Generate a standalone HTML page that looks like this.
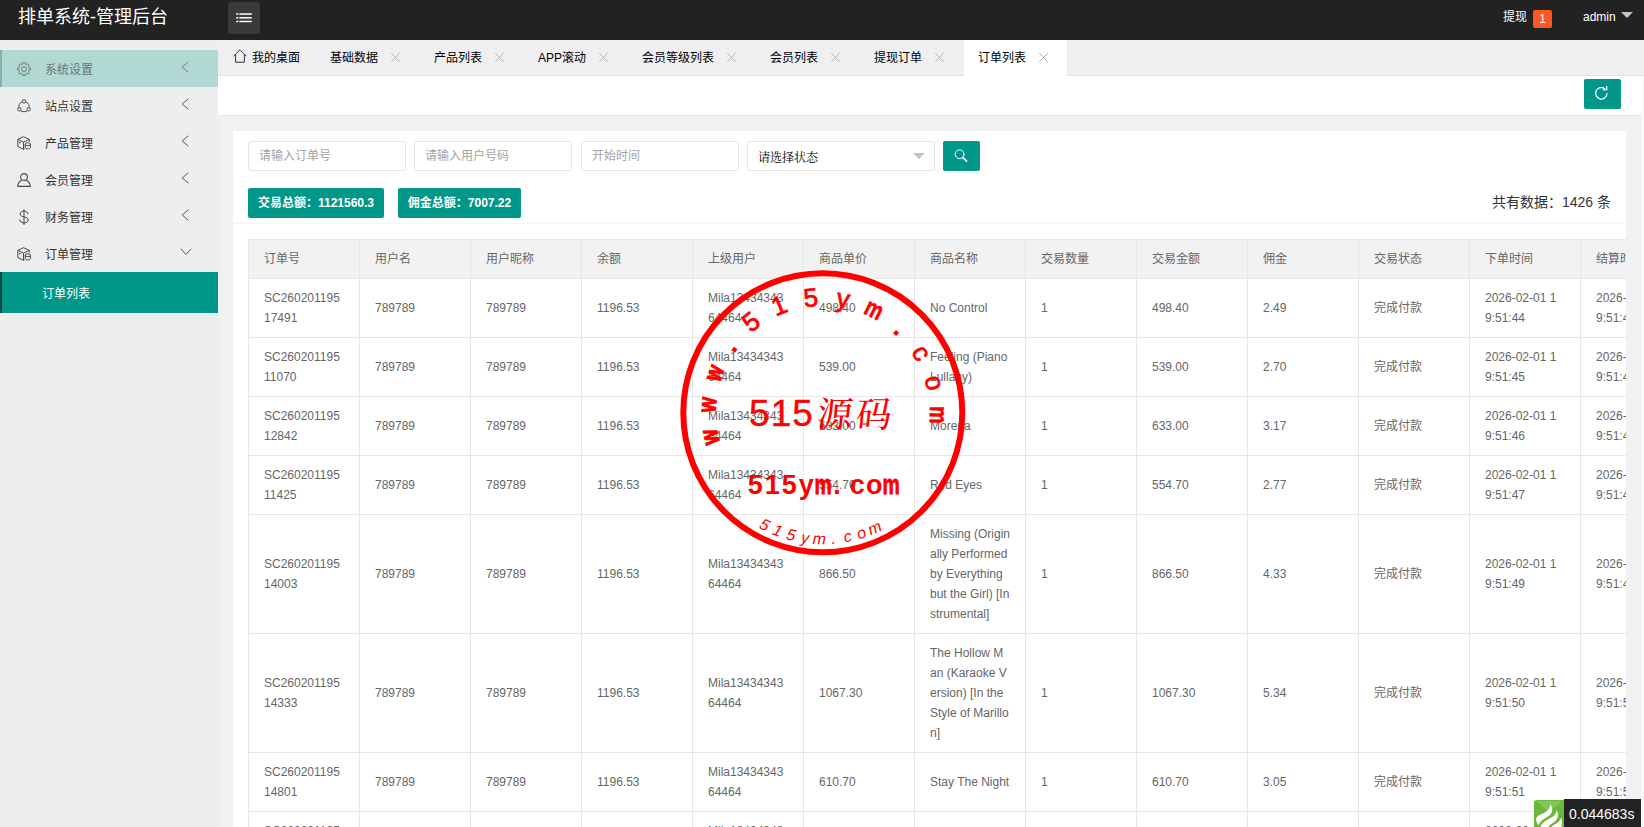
<!DOCTYPE html>
<html lang="zh-CN">
<head>
<meta charset="utf-8">
<title>排单系统-管理后台</title>
<style>
*{box-sizing:border-box;margin:0;padding:0}
html,body{width:1644px;height:827px;overflow:hidden}
body{position:relative;background:#f1f1f1;font-family:"Liberation Sans","Noto Sans CJK SC",sans-serif;font-size:12px;color:#333;line-height:1}
a{color:inherit;text-decoration:none}
ul{list-style:none}
/* header */
.hd{position:absolute;left:0;top:0;width:1644px;height:40px;background:#222}
.logo{position:absolute;left:18px;top:0;height:34px;line-height:34px;font-size:18px;color:#fff;white-space:nowrap}
.burger{position:absolute;left:228px;top:2px;width:32px;height:32px;border-radius:3px;background:#3a3a3a}
.burger svg{position:absolute;left:8px;top:10px}
.hr{position:absolute;top:0;height:34px;line-height:34px;color:#fff;font-size:12px;white-space:nowrap}
.badge{position:absolute;left:1533px;top:10px;width:19px;height:18px;line-height:18px;border-radius:2px;background:#ff5722;color:#fff;text-align:center;font-size:12px}
.tri{position:absolute;width:0;height:0;border:6px solid transparent;border-bottom-width:0}
/* sidebar */
.side{position:absolute;left:0;top:40px;width:218px;height:787px;background:#eee}
.side li{position:absolute;left:0;width:218px;height:37px}
.side li .t{position:absolute;left:45px;top:1px;line-height:38px;font-size:12px;color:#333;white-space:nowrap}
.side li .ic{position:absolute;left:16px;top:11px}
.side li .dl{font-family:"Noto Sans CJK SC",sans-serif;font-weight:300;font-size:17px;line-height:16px;width:16px;text-align:center;color:#333;top:12px}
.side li svg.ar{position:absolute;left:180px;top:11px}
.side li.hov{background:#b2d8d4;border-left:2px solid #7fb4ad}
.side li.hov .t{color:#6a7574;left:43px}
.side li.hov .ic{left:14px}
.side li.hov svg.ar{left:178px}
.side li.sub{top:232px;height:41px;background:#009688;border-left:2px solid #004c45}
.side li.sub .t{left:40px;color:#fff;line-height:42px}
/* tabs */
.tabs{position:absolute;left:218px;top:40px;width:1426px;height:36px;background:#efeef0;border-bottom:1px solid #e2e2e2}
.tab{position:absolute;top:0;height:35px;line-height:37px;font-size:12px;color:#000;white-space:nowrap}
.tab.on{background:#fff;height:36px}
.tab .x{position:absolute;top:12px}
.tool{position:absolute;left:218px;top:76px;width:1423px;height:40px;background:#fff;border-bottom:1px solid #e6e6e6}
.btn{position:absolute;background:#009688;border-radius:2px;color:#fff;height:30px;line-height:30px;font-size:12px;white-space:nowrap;text-align:center}
.sbar{position:absolute;left:1641px;top:76px;width:3px;height:751px;background:#fafafa}
/* card */
.card{position:absolute;left:233px;top:131px;width:1393px;height:700px;background:#fff;border-radius:2px;overflow:hidden}
.inp{position:absolute;top:10px;height:30px;border:1px solid #e6e6e6;border-radius:2px;background:#fff;line-height:29px;padding-left:10px;font-size:12px;color:#a3a3a3;white-space:nowrap}
.hline{position:absolute;left:0;top:92px;width:1393px;height:1px;background:#f6f6f6}
.total{position:absolute;right:15px;top:61px;font-size:14px;color:#333;line-height:20px;white-space:nowrap}
table{position:absolute;left:15px;top:108px;border-collapse:collapse;table-layout:fixed;width:1554px;font-size:12px;color:#666}
th,td{border:1px solid #e6e6e6;padding:9px 15px;line-height:20px;text-align:left;font-weight:400;white-space:nowrap;vertical-align:middle;overflow:hidden}
th{background:#f2f2f2}
/* trace */
.tp{position:absolute;left:1534px;top:799px;width:107px;height:30px}
.tp .tm{position:absolute;left:30px;top:0;width:77px;height:30px;background:#232323;color:#fff;font-size:14px;line-height:30px;padding-left:5px}
.stamp{position:absolute;left:673px;top:263px}
</style>
</head>
<body>
<div class="hd">
  <div class="logo">排单系统-管理后台</div>
  <div class="burger"><svg width="16" height="12" viewBox="0 0 16 12"><g fill="#fff"><rect x="0.2" y="1.3" width="2.2" height="1.5"/><rect x="3.4" y="1.3" width="12.4" height="1.5"/><rect x="0.2" y="5.05" width="2.2" height="1.5"/><rect x="3.4" y="5.05" width="12.4" height="1.5"/><rect x="0.2" y="8.8" width="2.2" height="1.4"/><rect x="3.4" y="8.8" width="12.4" height="1.4"/></g></svg></div>
  <div class="hr" style="left:1503px">提现</div>
  <div class="badge">1</div>
  <div class="hr" style="left:1583px">admin</div>
  <div class="tri" style="left:1621px;top:12px;border-top-color:#c4c4c4"></div>
</div>

<div class="side">
<ul>
  <li class="hov" style="top:10px"><svg class="ic" width="16" height="16" viewBox="-1 -1 16 16" fill="none" stroke="#6f7b7a" stroke-width="1" stroke-linejoin="round"><path d="M5.81 2.04 L5.87 0.50 L8.13 0.50 L8.19 2.04 L9.66 2.65 L10.80 1.60 L12.40 3.20 L11.35 4.34 L11.96 5.81 L13.50 5.87 L13.50 8.13 L11.96 8.19 L11.35 9.66 L12.40 10.80 L10.80 12.40 L9.66 11.35 L8.19 11.96 L8.13 13.50 L5.87 13.50 L5.81 11.96 L4.34 11.35 L3.20 12.40 L1.60 10.80 L2.65 9.66 L2.04 8.19 L0.50 8.13 L0.50 5.87 L2.04 5.81 L2.65 4.34 L1.60 3.20 L3.20 1.60 L4.34 2.65Z"/><circle cx="7" cy="7" r="2.4"/></svg><span class="t">系统设置</span><svg class="ar" width="10" height="12" viewBox="0 0 10 12" fill="none" stroke="#6f7b7a" stroke-width="1"><path d="M8.3 0.8 L2.2 6 L8.3 11.2"/></svg></li>
  <li style="top:47px"><svg class="ic" width="16" height="16" viewBox="-1 -1 16 16" fill="none" stroke="#4a4a4a" stroke-width="1"><circle cx="7" cy="7.6" r="5.2"/><circle cx="7" cy="2.3" r="1.7" fill="#eee"/><circle cx="2.3" cy="10.3" r="1.7" fill="#eee"/><circle cx="11.7" cy="10.3" r="1.7" fill="#eee"/></svg><span class="t">站点设置</span><svg class="ar" width="10" height="12" viewBox="0 0 10 12" fill="none" stroke="#555" stroke-width="1"><path d="M8.3 0.8 L2.2 6 L8.3 11.2"/></svg></li>
  <li style="top:84px"><svg class="ic" width="16" height="16" viewBox="-1 -1 16 16" fill="none" stroke="#4a4a4a" stroke-width="1" stroke-linejoin="round"><path d="M6.5 0.7 L12.3 3.4 L12.3 5.6 M6.5 0.7 L0.8 3.4 L0.8 10.6 L6.5 13.3 L6.5 6.1 L0.8 3.4 M6.5 6.1 L12.3 3.4 M6.5 13.3 L7.6 12.8"/><circle cx="2.9" cy="6.6" r="0.5"/><ellipse cx="10.8" cy="8.2" rx="2.6" ry="1.5"/><path d="M8.2 8.2 V11.4 C8.2 13.4 13.4 13.4 13.4 11.4 V8.2"/></svg><span class="t">产品管理</span><svg class="ar" width="10" height="12" viewBox="0 0 10 12" fill="none" stroke="#555" stroke-width="1"><path d="M8.3 0.8 L2.2 6 L8.3 11.2"/></svg></li>
  <li style="top:121px"><svg class="ic" width="16" height="16" viewBox="-1 -1 16 16" fill="none" stroke="#4a4a4a" stroke-width="1.1" stroke-linejoin="round"><circle cx="7" cy="4" r="3.4"/><path d="M4.9 7 C3 8 0.9 9.8 0.7 13.4 H13.3 C13.1 9.8 11 8 9.1 7"/></svg><span class="t">会员管理</span><svg class="ar" width="10" height="12" viewBox="0 0 10 12" fill="none" stroke="#555" stroke-width="1"><path d="M8.3 0.8 L2.2 6 L8.3 11.2"/></svg></li>
  <li style="top:158px"><svg class="ic" width="16" height="16" viewBox="0 0 16 16" fill="none" stroke="#444" stroke-width="1" stroke-linecap="round"><path d="M11.9 4.9 C11.7 3.2 10.2 2.2 8 2.2 C5.8 2.2 4.2 3.3 4.2 5 C4.2 8.9 12.2 6.9 12.2 11 C12.2 12.8 10.4 13.9 8 13.9 C5.6 13.9 3.9 12.8 3.7 10.9"/><path d="M8 0.6 V15.6"/></svg><span class="t">财务管理</span><svg class="ar" width="10" height="12" viewBox="0 0 10 12" fill="none" stroke="#555" stroke-width="1"><path d="M8.3 0.8 L2.2 6 L8.3 11.2"/></svg></li>
  <li style="top:195px"><svg class="ic" width="16" height="16" viewBox="-1 -1 16 16" fill="none" stroke="#4a4a4a" stroke-width="1" stroke-linejoin="round"><path d="M6.5 0.7 L12.3 3.4 L12.3 5.6 M6.5 0.7 L0.8 3.4 L0.8 10.6 L6.5 13.3 L6.5 6.1 L0.8 3.4 M6.5 6.1 L12.3 3.4 M6.5 13.3 L7.6 12.8"/><circle cx="2.9" cy="6.6" r="0.5"/><ellipse cx="10.8" cy="8.2" rx="2.6" ry="1.5"/><path d="M8.2 8.2 V11.4 C8.2 13.4 13.4 13.4 13.4 11.4 V8.2"/></svg><span class="t">订单管理</span><svg class="ar" width="12" height="10" viewBox="0 0 12 10" fill="none" stroke="#555" stroke-width="1"><path d="M0.8 2.8 L6 8.4 L11.2 2.8"/></svg></li>
  <li class="sub"><span class="t">订单列表</span></li>
</ul>
</div>

<div class="tabs">
  <svg style="position:absolute;left:15px;top:9px" width="14" height="15" viewBox="0 0 14 15" fill="none" stroke="#333" stroke-width="1" stroke-linejoin="round"><path d="M0.6 7.2 L7 0.8 L13.4 7.2 M2.6 5.6 V13.2 H11.4 V5.6"/></svg><div class="tab" style="left:34px">我的桌面</div>
  <div class="tab" style="left:112px">基础数据</div><svg class="x" style="position:absolute;left:171.5px;top:12px" width="11" height="11" viewBox="0 0 11 11" fill="none" stroke="#b4b4b4" stroke-width="1"><path d="M1.2 1.2 L9.8 9.8 M9.8 1.2 L1.2 9.8"/></svg>
  <div class="tab" style="left:216px">产品列表</div><svg class="x" style="position:absolute;left:276.0px;top:12px" width="11" height="11" viewBox="0 0 11 11" fill="none" stroke="#b4b4b4" stroke-width="1"><path d="M1.2 1.2 L9.8 9.8 M9.8 1.2 L1.2 9.8"/></svg>
  <div class="tab" style="left:320px">APP滚动</div><svg class="x" style="position:absolute;left:379.5px;top:12px" width="11" height="11" viewBox="0 0 11 11" fill="none" stroke="#b4b4b4" stroke-width="1"><path d="M1.2 1.2 L9.8 9.8 M9.8 1.2 L1.2 9.8"/></svg>
  <div class="tab" style="left:424px">会员等级列表</div><svg class="x" style="position:absolute;left:507.5px;top:12px" width="11" height="11" viewBox="0 0 11 11" fill="none" stroke="#b4b4b4" stroke-width="1"><path d="M1.2 1.2 L9.8 9.8 M9.8 1.2 L1.2 9.8"/></svg>
  <div class="tab" style="left:552px">会员列表</div><svg class="x" style="position:absolute;left:611.5px;top:12px" width="11" height="11" viewBox="0 0 11 11" fill="none" stroke="#b4b4b4" stroke-width="1"><path d="M1.2 1.2 L9.8 9.8 M9.8 1.2 L1.2 9.8"/></svg>
  <div class="tab" style="left:656px">提现订单</div><svg class="x" style="position:absolute;left:716.0px;top:12px" width="11" height="11" viewBox="0 0 11 11" fill="none" stroke="#b4b4b4" stroke-width="1"><path d="M1.2 1.2 L9.8 9.8 M9.8 1.2 L1.2 9.8"/></svg>
  <div class="tab on" style="left:746px;width:103px;padding-left:14px">订单列表</div><svg class="x" style="position:absolute;left:819.5px;top:12px" width="11" height="11" viewBox="0 0 11 11" fill="none" stroke="#b4b4b4" stroke-width="1"><path d="M1.2 1.2 L9.8 9.8 M9.8 1.2 L1.2 9.8"/></svg>
</div>
<div class="tool"><div class="btn" style="left:1366px;top:3px;width:37px"><svg style="position:absolute;left:9px;top:6px" width="17" height="17" viewBox="0 0 16 16" fill="none" stroke="#fff" stroke-width="1.2" stroke-linecap="round" stroke-linejoin="round"><path d="M13.2 8.2 A5.4 5.4 0 1 1 11.2 3.6"/><path d="M9.6 4.6 L13 4.4 L12.8 1.2" /></svg></div></div>
<div class="sbar"></div>

<div class="card">
  <div class="inp" style="left:15px;width:158px">请输入订单号</div>
  <div class="inp" style="left:181px;width:158px">请输入用户号码</div>
  <div class="inp" style="left:348px;width:158px">开始时间</div>
  <div class="inp" style="left:514px;width:188px;color:#000;line-height:32px;font-family:'Liberation Serif','Noto Serif CJK SC',serif">请选择状态<span class="tri" style="left:165px;top:11px;border-top-color:#c2c2c2"></span></div>
  <div class="btn" style="left:710px;top:10px;width:37px"><svg style="position:absolute;left:10px;top:7px" width="16" height="16" viewBox="0 0 16 16" fill="none" stroke="#fff" stroke-width="1" stroke-linecap="round"><circle cx="6.6" cy="6.2" r="4.4"/><path d="M10.2 9.8 L13.6 13.2" stroke-width="1.8"/></svg></div>
  <div class="btn" style="left:15px;top:57px;width:136px;font-weight:bold">交易总额：1121560.3</div>
  <div class="btn" style="left:165px;top:57px;width:123px;font-weight:bold">佣金总额：7007.22</div>
  <div class="total">共有数据：1426 条</div>
  <div class="hline"></div>
  <table>
    <colgroup><col style="width:111px"><col style="width:111px"><col style="width:111px"><col style="width:111px"><col style="width:111px"><col style="width:111px"><col style="width:111px"><col style="width:111px"><col style="width:111px"><col style="width:111px"><col style="width:111px"><col style="width:111px"><col style="width:111px"><col style="width:111px"></colgroup>
    <thead><tr><th>订单号</th><th>用户名</th><th>用户昵称</th><th>余额</th><th>上级用户</th><th>商品单价</th><th>商品名称</th><th>交易数量</th><th>交易金额</th><th>佣金</th><th>交易状态</th><th>下单时间</th><th>结算时间</th><th>操作</th></tr></thead>
    <tbody>
    <tr><td>SC260201195<br>17491</td><td>789789</td><td>789789</td><td>1196.53</td><td>Mila13434343<br>64464</td><td>498.40</td><td>No Control</td><td>1</td><td>498.40</td><td>2.49</td><td>完成付款</td><td>2026-02-01 1<br>9:51:44</td><td>2026-02-01 1<br>9:51:48</td><td></td></tr>
    <tr><td>SC260201195<br>11070</td><td>789789</td><td>789789</td><td>1196.53</td><td>Mila13434343<br>64464</td><td>539.00</td><td>Feeling (Piano<br>Lullaby)</td><td>1</td><td>539.00</td><td>2.70</td><td>完成付款</td><td>2026-02-01 1<br>9:51:45</td><td>2026-02-01 1<br>9:51:48</td><td></td></tr>
    <tr><td>SC260201195<br>12842</td><td>789789</td><td>789789</td><td>1196.53</td><td>Mila13434343<br>64464</td><td>633.00</td><td>Morena</td><td>1</td><td>633.00</td><td>3.17</td><td>完成付款</td><td>2026-02-01 1<br>9:51:46</td><td>2026-02-01 1<br>9:51:48</td><td></td></tr>
    <tr><td>SC260201195<br>11425</td><td>789789</td><td>789789</td><td>1196.53</td><td>Mila13434343<br>64464</td><td>554.70</td><td>Red Eyes</td><td>1</td><td>554.70</td><td>2.77</td><td>完成付款</td><td>2026-02-01 1<br>9:51:47</td><td>2026-02-01 1<br>9:51:48</td><td></td></tr>
    <tr><td>SC260201195<br>14003</td><td>789789</td><td>789789</td><td>1196.53</td><td>Mila13434343<br>64464</td><td>866.50</td><td>Missing (Origin<br>ally Performed<br>by Everything<br>but the Girl) [In<br>strumental]</td><td>1</td><td>866.50</td><td>4.33</td><td>完成付款</td><td>2026-02-01 1<br>9:51:49</td><td>2026-02-01 1<br>9:51:49</td><td></td></tr>
    <tr><td>SC260201195<br>14333</td><td>789789</td><td>789789</td><td>1196.53</td><td>Mila13434343<br>64464</td><td>1067.30</td><td>The Hollow M<br>an (Karaoke V<br>ersion) [In the<br>Style of Marillo<br>n]</td><td>1</td><td>1067.30</td><td>5.34</td><td>完成付款</td><td>2026-02-01 1<br>9:51:50</td><td>2026-02-01 1<br>9:51:50</td><td></td></tr>
    <tr><td>SC260201195<br>14801</td><td>789789</td><td>789789</td><td>1196.53</td><td>Mila13434343<br>64464</td><td>610.70</td><td>Stay The Night</td><td>1</td><td>610.70</td><td>3.05</td><td>完成付款</td><td>2026-02-01 1<br>9:51:51</td><td>2026-02-01 1<br>9:51:51</td><td></td></tr>
    <tr><td>SC260201195<br>15229</td><td>789789</td><td>789789</td><td>1196.53</td><td>Mila13434343<br>64464</td><td>712.40</td><td>Wonderwall</td><td>1</td><td>712.40</td><td>3.56</td><td>完成付款</td><td>2026-02-01 1<br>9:51:52</td><td>2026-02-01 1<br>9:51:52</td><td></td></tr>
    </tbody>
  </table>
</div>

<svg class="stamp" width="300" height="300" viewBox="0 0 300 300" font-family="'Liberation Sans',sans-serif" fill="#f00" stroke="#f00" stroke-width="0">
<circle cx="149.8" cy="149.8" r="139.5" fill="none" stroke="#f00" stroke-width="6"/>
<text transform="translate(45.22 172.41) rotate(-102.20) scale(0.74 1)" font-size="26" text-anchor="middle" font-weight="bold" stroke-width="1.1">w</text>
<text transform="translate(43.06 142.39) rotate(-86.03) scale(0.74 1)" font-size="26" text-anchor="middle" font-weight="bold" stroke-width="1.1">w</text>
<text transform="translate(49.34 112.96) rotate(-69.86) scale(0.74 1)" font-size="26" text-anchor="middle" font-weight="bold" stroke-width="1.1">w</text>
<text transform="translate(62.70 87.65) rotate(-54.49)" font-size="26" text-anchor="middle" stroke-width="1.6">.</text>
<text transform="translate(83.45 65.85) rotate(-38.32)" font-size="26" text-anchor="middle" stroke-width="0.8">5</text>
<text transform="translate(109.46 50.70) rotate(-22.15)" font-size="26" text-anchor="middle" stroke-width="0.8">1</text>
<text transform="translate(138.65 43.38) rotate(-5.98)" font-size="26" text-anchor="middle" stroke-width="0.8">5</text>
<text transform="translate(168.73 44.49) rotate(10.19)" font-size="26" text-anchor="middle" stroke-width="0.8">y</text>
<text transform="translate(197.31 53.93) rotate(26.36) scale(0.76 1)" font-size="26" text-anchor="middle" font-weight="bold" stroke-width="0.6">m</text>
<text transform="translate(222.13 70.95) rotate(42.53)" font-size="26" text-anchor="middle" stroke-width="1.6">.</text>
<text transform="translate(241.23 94.21) rotate(58.70)" font-size="26" text-anchor="middle" stroke-width="0.8">c</text>
<text transform="translate(253.09 121.87) rotate(74.87)" font-size="26" text-anchor="middle" stroke-width="0.8">o</text>
<text transform="translate(256.78 151.74) rotate(91.04) scale(0.76 1)" font-size="26" text-anchor="middle" font-weight="bold" stroke-width="0.6">m</text>
<text transform="translate(89.28 266.55) rotate(27.40)" font-size="16" font-style="italic" text-anchor="middle">5</text>
<text transform="translate(102.78 272.61) rotate(20.95)" font-size="16" font-style="italic" text-anchor="middle">1</text>
<text transform="translate(116.88 277.11) rotate(14.50)" font-size="16" font-style="italic" text-anchor="middle">5</text>
<text transform="translate(131.39 280.00) rotate(8.05)" font-size="16" font-style="italic" text-anchor="middle">y</text>
<text transform="translate(146.13 281.25) rotate(1.60)" font-size="16" font-style="italic" text-anchor="middle">m</text>
<text transform="translate(160.92 280.83) rotate(-4.85)" font-size="16" font-style="italic" text-anchor="middle">.</text>
<text transform="translate(175.57 278.75) rotate(-11.30)" font-size="16" font-style="italic" text-anchor="middle">c</text>
<text transform="translate(189.89 275.04) rotate(-17.75)" font-size="16" font-style="italic" text-anchor="middle">o</text>
<text transform="translate(203.70 269.74) rotate(-24.20)" font-size="16" font-style="italic" text-anchor="middle">m</text>
<text x="76" y="163" font-size="37" letter-spacing="1.1" stroke-width="0.4">515</text>
<text transform="translate(143 164) skewX(-6)" font-size="35.5" font-weight="500" letter-spacing="3.5" font-family="'Liberation Serif','Noto Serif CJK SC',serif">源码</text>
<text transform="translate(82.25 231)" font-size="27" font-weight="bold" text-anchor="middle">5</text>
<text transform="translate(99.25 231)" font-size="27" font-weight="bold" text-anchor="middle">1</text>
<text transform="translate(116.25 231)" font-size="27" font-weight="bold" text-anchor="middle">5</text>
<text transform="translate(133.25 231)" font-size="27" font-weight="bold" text-anchor="middle">y</text>
<text transform="translate(150.25 231) scale(0.72 1)" font-size="27" font-weight="bold" text-anchor="middle" stroke-width="0.8">m</text>
<text transform="translate(164.05 231)" font-size="27" font-weight="bold" text-anchor="middle">.</text>
<text transform="translate(184.25 231)" font-size="27" font-weight="bold" text-anchor="middle">c</text>
<text transform="translate(201.25 231)" font-size="27" font-weight="bold" text-anchor="middle">o</text>
<text transform="translate(218.25 231) scale(0.72 1)" font-size="27" font-weight="bold" text-anchor="middle" stroke-width="0.8">m</text>
</svg>
<div class="tp"><svg style="position:absolute;left:0;top:1px" width="30" height="30" viewBox="0 0 30 30"><path d="M3 0 H30 V30 H0 V3 A3 3 0 0 1 3 0Z" fill="#6cb83a"/><path d="M2 1 L28 1 L15 12 Z" fill="#84c559"/><path d="M16.6 4.2 C19.6 10 18.4 14 13.2 17 C9 19.4 6 21 4.9 25.4 C2 22 0.8 18.4 4 16 C8 13.2 15.6 12 16.6 4.2Z M22.6 10.2 C26 16.4 22.6 21 18 23.6 C15.4 25 13.8 27 13.8 30 H6.8 C6 26 7.6 23 12 20.6 C17 17.8 22 15.6 22.6 10.2Z M27 17.6 C29 22 28 26 26 30 H15.6 C16 27.4 18 26 20.6 24.6 C24 22.8 26.4 21 27 17.6Z" fill="#fff"/></svg><div class="tm">0.044683s</div></div>
</body>
</html>
